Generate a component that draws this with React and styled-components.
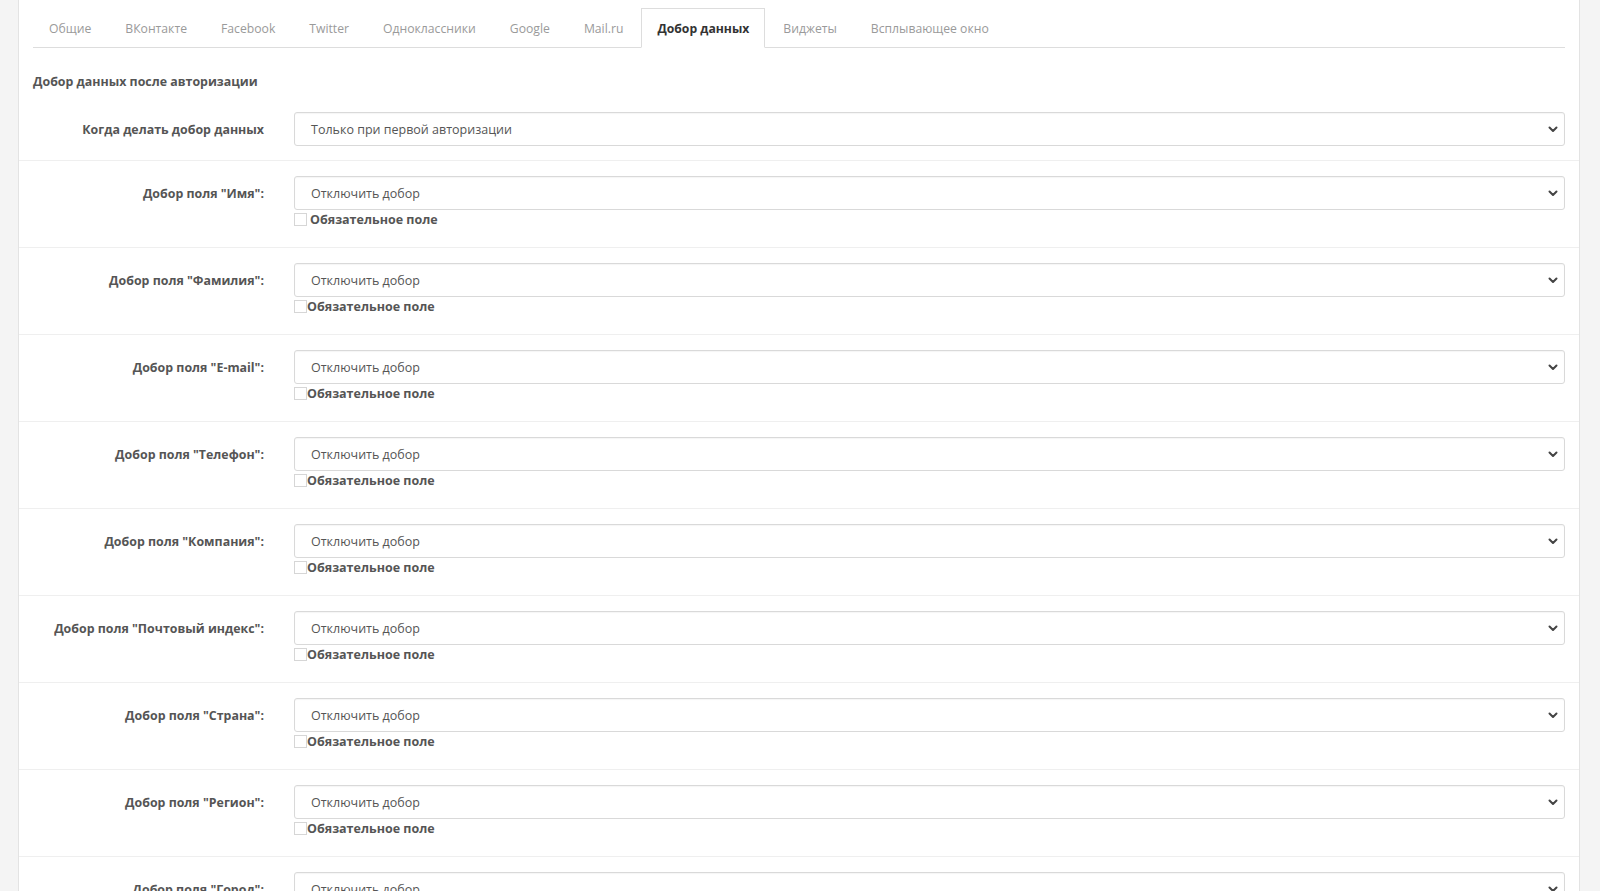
import React from "react";
import styled, { createGlobalStyle } from "styled-components";

const GlobalStyle = createGlobalStyle`
  html, body {
    margin: 0;
    padding: 0;
    overflow: hidden;
    background: #f4f4f4;
  }
  body {
    font-family: "Open Sans", "Liberation Sans", sans-serif;
    font-size: 12.5px;
    color: #555;
  }
`;

const tabs = [
  "Общие",
  "ВКонтакте",
  "Facebook",
  "Twitter",
  "Одноклассники",
  "Google",
  "Mail.ru",
  "Добор данных",
  "Виджеты",
  "Всплывающее окно",
];

const fields = [
  { label: 'Добор поля "Имя":', spaced: true },
  { label: 'Добор поля "Фамилия":' },
  { label: 'Добор поля "E-mail":' },
  { label: 'Добор поля "Телефон":' },
  { label: 'Добор поля "Компания":' },
  { label: 'Добор поля "Почтовый индекс":' },
  { label: 'Добор поля "Страна":' },
  { label: 'Добор поля "Регион":' },
  { label: 'Добор поля "Город":' },
  { label: 'Добор поля "Адрес":' },
];

function Chevron() {
  return (
    <svg width="10" height="7" viewBox="0 0 10 7">
      <polyline
        points="1.5,1.5 5,5 8.5,1.5"
        fill="none"
        stroke="#444"
        strokeWidth="2"
        strokeLinecap="round"
        strokeLinejoin="round"
      />
    </svg>
  );
}

function FakeSelect({ value }) {
  return (
    <SelectBox>
      <span>{value}</span>
      <Chevron />
    </SelectBox>
  );
}

function App() {
  return (
    <Page>
      <GlobalStyle />
      <Panel>
        <TabBar>
          {tabs.map((t) => (
            <Tab key={t} $active={t === "Добор данных"}>
              {t}
            </Tab>
          ))}
        </TabBar>
        <Heading>Добор данных после авторизации</Heading>
        <FormRow>
          <Label>Когда делать добор данных</Label>
          <Control>
            <FakeSelect value="Только при первой авторизации" />
          </Control>
        </FormRow>
        {fields.map((f) => (
          <FormRow key={f.label} $withCheck>
            <Label>{f.label}</Label>
            <Control>
              <FakeSelect value="Отключить добор" />
              <CheckLine $spaced={f.spaced}>
                <CheckBox />
                <CheckText>Обязательное поле</CheckText>
              </CheckLine>
            </Control>
          </FormRow>
        ))}
      </Panel>
    </Page>
  );
}

const Page = styled.div`
  height: 100vh;
  overflow: hidden;
  background: #f4f4f4;
  padding: 0 20px 0 18px;
`;

const Panel = styled.div`
  background: #fff;
  border-left: 1px solid #e3e3e3;
  border-right: 1px solid #e3e3e3;
  padding-top: 8px;
  min-height: 100%;
`;

const TabBar = styled.ul`
  display: flex;
  list-style: none;
  margin: 0 14px;
  padding: 0;
  border-bottom: 1px solid #dddddd;
`;

const Tab = styled.li`
  padding: 11px 15px 9px;
  margin-right: 2px;
  margin-bottom: -1px;
  line-height: 18px;
  font-size: 12.2px;
  border: 1px solid ${({ $active }) => ($active ? "#dddddd" : "transparent")};
  border-bottom-color: ${({ $active }) => ($active ? "#fff" : "transparent")};
  background: ${({ $active }) => ($active ? "#fff" : "transparent")};
  color: ${({ $active }) => ($active ? "#333" : "#9a9a9a")};
  font-weight: ${({ $active }) => ($active ? 700 : 400)};
  cursor: pointer;
`;

const Heading = styled.h4`
  margin: 25px 14px 6px;
  font-size: 12.4px;
  line-height: 18px;
  font-weight: 700;
  color: #555;
`;

const FormRow = styled.div`
  display: grid;
  grid-template-columns: 246px 1fr;
  padding: ${({ $withCheck }) => ($withCheck ? "15px 14px 18px" : "15px 14px 14px")};
  border-bottom: 1px solid #efefef;
`;

const Label = styled.label`
  text-align: right;
  padding: 9px 15px 0 0;
  line-height: 18px;
  font-size: 12.4px;
  font-weight: 700;
  color: #555;
`;

const Control = styled.div`
  padding-left: 15px;
  display: flex;
  flex-direction: column;
`;

const SelectBox = styled.div`
  height: 34px;
  box-sizing: border-box;
  border: 1px solid #d9d9d9;
  border-radius: 3px;
  display: flex;
  align-items: center;
  justify-content: space-between;
  padding: 0 6px 0 16px;
  color: #555;
  font-size: 12.5px;
  box-shadow: inset 0 1px 1px rgba(0, 0, 0, 0.04);
`;

const CheckLine = styled.label`
  display: flex;
  align-items: flex-start;
  gap: ${({ $spaced }) => ($spaced ? "3px" : "0")};
  line-height: 18px;
`;

const CheckText = styled.span`
  padding-top: 1px;
  font-size: 12.5px;
  font-weight: 700;
  color: #555;
`;

const CheckBox = styled.span`
  width: 11px;
  height: 11px;
  margin-top: 3px;
  border: 1px solid #d6d6d6;
  background: #fff;
  flex-shrink: 0;
`;

export default App;
